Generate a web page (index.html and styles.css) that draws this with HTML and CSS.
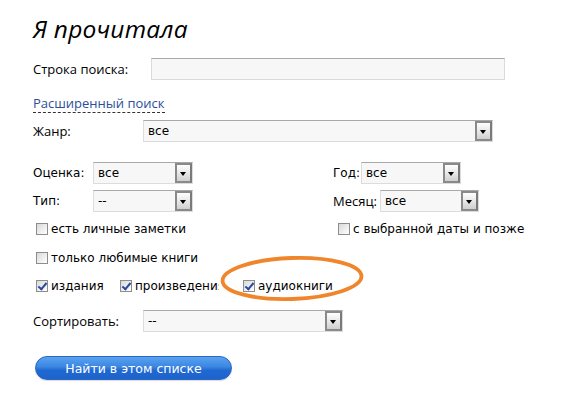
FILE: index.html
```html
<!DOCTYPE html>
<html lang="ru">
<head>
<meta charset="utf-8">
<link rel="stylesheet" href="styles.css">
</head>
<body>
<div class="page">
  <h1 class="title">Я прочитала</h1>

  <div class="row search-row">
    <span class="label seg w118">Строка поиска:</span>
    <div class="input"></div>
  </div>

  <div class="row link-row">
    <a class="adv">Расширенный поиск</a>
  </div>

  <div class="row genre-row">
    <span class="label seg w110">Жанр:</span>
    <div class="select w350"><span class="val">все</span><span class="arrow"></span></div>
  </div>

  <div class="cols">
    <div class="col left">
      <div class="row ctl">
        <span class="label tah w60">Оценка:</span>
        <div class="select w100"><span class="val">все</span><span class="arrow"></span></div>
      </div>
      <div class="row ctl">
        <span class="label tah w60">Тип:</span>
        <div class="select w100"><span class="val">--</span><span class="arrow"></span></div>
      </div>
      <div class="row cb"><span class="box"></span><span class="cbt">есть личные заметки</span></div>
    </div>
    <div class="col right">
      <div class="row ctl">
        <span class="label tah w28">Год:</span>
        <div class="select w100"><span class="val">все</span><span class="arrow"></span></div>
      </div>
      <div class="row ctl">
        <span class="label seg w47">Месяц:</span>
        <div class="select w99"><span class="val">все</span><span class="arrow"></span></div>
      </div>
      <div class="row cb cb-right"><span class="box"></span><span class="cbt">с выбранной даты и позже</span></div>
    </div>
  </div>

  <div class="row cb cb2"><span class="box"></span><span class="cbt">только любимые книги</span></div>

  <div class="row cb types">
    <span class="item i1"><span class="box checked"></span><span class="cbt">издания</span></span>
    <span class="item i2"><span class="box checked"></span><span class="cbt clip">произведения</span></span>
    <span class="item i3"><span class="box checked"></span><span class="cbt">аудиокниги</span></span>
    <svg class="oval" width="150" height="52" viewBox="0 0 150 52">
      <ellipse cx="73" cy="24.5" rx="69.5" ry="20.5" fill="none" stroke="#f0862c" stroke-width="3.8" transform="rotate(-2 73 24.5)"/>
    </svg>
  </div>

  <div class="row sort-row">
    <span class="label seg w110">Сортировать:</span>
    <div class="select w200"><span class="val">--</span><span class="arrow"></span></div>
  </div>

  <div class="row btn-row">
    <button class="btn">Найти в этом списке</button>
  </div>
</div>
</body>
</html>
```

FILE: styles.css
```css
* { box-sizing: border-box; }
html, body { margin: 0; padding: 0; background: #fff; }
body { width: 575px; height: 409px; overflow: hidden; color: #000; }

.page { padding: 14px 0 0 33px; }

.title {
  margin: 0;
  font-family: "Open Sans", "Noto Sans", sans-serif;
  font-style: italic;
  font-weight: 400;
  font-size: 24.5px;
  line-height: 30px;
  height: 30px;
  letter-spacing: 0.2px;
}

.row { display: flex; align-items: center; position: relative; }

.label { flex: none; color: #000; }
.seg { font-family: "Open Sans", "Noto Sans", sans-serif; font-size: 13px; }
.tah { font-family: "DejaVu Sans", sans-serif; font-size: 12px; }
.w118 { width: 118px; }
.w110 { width: 110px; }
.w60 { width: 60px; }
.w28 { width: 28px; }
.w47 { width: 47px; }

.search-row { margin-top: 14px; height: 22px; }
.input {
  width: 354px; height: 22px;
  background: #f7f7f7;
  border: 1px solid #dadada;
  border-top-color: #a8a8a8;
}

.link-row { margin-top: 13px; height: 22px; }
.adv {
  font-family: "Open Sans", "Noto Sans", sans-serif;
  font-size: 13px;
  color: #2c4f99;
  border-bottom: 1px dashed #333;
  line-height: 16px;
  padding-bottom: 1px;
}

.genre-row { margin-top: 5px; height: 22px; }

.select {
  position: relative;
  height: 22px;
  background: #f7f7f7;
  border: 1px solid #dcdcdc;
  border-top-color: #a8a8a8;
  font-family: "DejaVu Sans", sans-serif;
  font-size: 12px;
  display: flex; align-items: center;
  padding-left: 4px;
}
.w350 { width: 350px; }
.w100 { width: 100px; }
.w99 { width: 99px; }
.w200 { width: 200px; }
.arrow {
  position: absolute; right: 0; top: 0; bottom: 0;
  width: 17px;
  border: 2px solid #8a8a8a;
  border-right-color: #7a7a7a;
  background: linear-gradient(#ffffff, #e6e6e6 55%, #cfcfcf);
}
.arrow::after {
  content: "";
  position: absolute; left: 3px; top: 7px;
  border-left: 3.5px solid transparent;
  border-right: 3.5px solid transparent;
  border-top: 4px solid #000;
}

.cols { display: flex; margin-top: 20px; }
.col { display: flex; flex-direction: column; }
.left { width: 300px; }
.ctl { height: 22px; }
.ctl + .ctl { margin-top: 6px; }

.cb { height: 22px; margin-top: 6px; padding-left: 3px; }
.col .cb { margin-top: 6px; }
.cb2 { margin-top: 7px; }
.cb-right { padding-left: 5px; }
.box {
  flex: none;
  width: 12px; height: 12px;
  border: 1px solid #8d8d8d;
  background: linear-gradient(135deg, #d9d9d9, #f4f4f4 70%, #ffffff);
  margin-right: 3px;
  position: relative;
}
.box.checked::after {
  content: "";
  position: absolute;
  left: 3px; top: 0px;
  width: 3px; height: 7px;
  border: solid #2a4aa0;
  border-width: 0 2px 2px 0;
  transform: rotate(40deg);
}
.cbt { font-family: "DejaVu Sans", sans-serif; font-size: 12px; white-space: nowrap; }

.types { margin-top: 6px; }
.item { display: flex; align-items: center; flex: none; }
.i1 { width: 84px; }
.i2 { width: 123px; }
.i2 .clip { overflow: hidden; width: 84px; display: block; }
.oval { position: absolute; left: 186px; top: -21px; pointer-events: none; }

.sort-row { margin-top: 13px; height: 22px; }

.btn-row { margin-top: 24px; }
.btn {
  width: 197px; height: 24px;
  margin-left: 2px;
  border-radius: 12px;
  border: 1px solid #2a66c4;
  background: linear-gradient(#5aa3ef, #3a86e2 45%, #2068d2 60%, #1d63cc);
  color: #fff;
  font-family: "DejaVu Sans", sans-serif;
  font-size: 12.5px;
  padding: 0;
  box-shadow: 0 1px 1px rgba(0,0,0,0.15);
}
```
